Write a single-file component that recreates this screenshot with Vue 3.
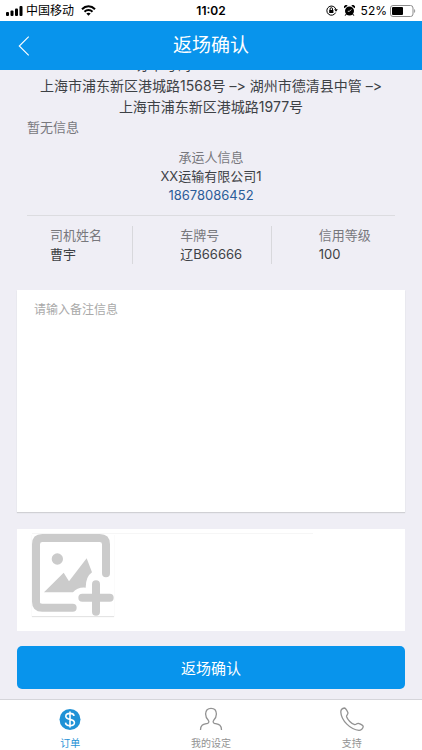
<script setup>
import { ref } from 'vue'

const remark = ref('')
const activeTab = ref('order')

const orderNo = '订单号码: 20171030077'
const route = '上海市浦东新区港城路1568号 –> 湖州市德清县中管 –> 上海市浦东新区港城路1977号'
const driver = [
  { label: '司机姓名', value: '曹宇' },
  { label: '车牌号', value: '辽B66666' },
  { label: '信用等级', value: '100' },
]
const tabs = [
  { id: 'order', label: '订单' },
  { id: 'settings', label: '我的设定' },
  { id: 'support', label: '支持' },
]
</script>

<template>
  <div class="page">
    <div class="status">
      <div class="status-side">
        <svg class="signal" width="17" height="10" viewBox="0 0 17 10" aria-hidden="true">
          <rect x="0" y="6" width="3" height="4" rx="1" />
          <rect x="4.5" y="4.5" width="3" height="5.5" rx="1" />
          <rect x="9" y="2.5" width="3" height="7.5" rx="1" />
          <rect x="13.5" y="0" width="3" height="10" rx="1" />
        </svg>
        <span class="carrier">中国移动</span>
        <svg class="wifi" width="15" height="11" viewBox="0 0 15 11" fill="none" stroke="#000" stroke-width="2" aria-hidden="true">
          <path d="M1 4.2C4.7.4 10.3.4 14 4.2" />
          <path d="M3.5 6.8C5.8 4.5 9.2 4.5 11.5 6.8" />
          <path d="M7.5 10.8L5.3 8.5C6.5 7.4 8.5 7.4 9.7 8.5Z" fill="#000" stroke="none" />
        </svg>
      </div>
      <strong class="clock">11:02</strong>
      <div class="status-side status-end">
        <svg width="12" height="11" viewBox="0 0 12 11" fill="none" stroke="#000" aria-hidden="true">
          <path d="M9.6 7.6A4.6 4.6 0 1 1 9.9 4.5" />
          <path d="M8.2 4.3h3.6L10 6.8z" fill="#000" stroke="none" />
          <rect x="3.2" y="5" width="4.2" height="3" fill="#000" stroke="none" />
          <path d="M4.1 5V3.9a1.2 1.2 0 0 1 2.4 0V5" />
        </svg>
        <svg class="alarm" width="11" height="11" viewBox="0 0 11 11" aria-hidden="true">
          <circle cx="5.5" cy="6" r="4.5" />
          <path d="M.4 3.2A2 2 0 0 1 3.6.8zM10.6 3.2A2 2 0 0 0 7.4.8z" />
          <path d="M2.2 9l-1 1.7M8.8 9l1 1.7" stroke="#000" />
          <path d="M7.3 4.4L5.5 6.3H3.8" fill="none" stroke="#fff" stroke-width=".8" />
        </svg>
        <span class="percent">52%</span>
        <svg width="26" height="12" viewBox="0 0 26 12" aria-hidden="true">
          <rect x=".5" y=".5" width="22.5" height="11" rx="2.5" fill="none" stroke="#8c8c8c" />
          <rect x="2" y="2" width="11" height="8" rx="1" />
          <path d="M24.2 4v4c1.3-.6 1.3-3.4 0-4z" fill="#8c8c8c" />
        </svg>
      </div>
    </div>

    <header class="bar">
      <button class="back" type="button" aria-label="返回">
        <svg width="14" height="24" viewBox="0 0 14 24" fill="none" stroke="#fff" stroke-width="1.3" aria-hidden="true">
          <path d="M12.5 1L1.5 12L12.5 23" />
        </svg>
      </button>
      <h1 class="title">返场确认</h1>
    </header>

    <main class="content">
      <section class="info">
        <div class="route">
          <p>{{ orderNo }}</p>
          <p>{{ route }}</p>
        </div>
        <p class="muted">暂无信息</p>
        <div class="carrier-info">
          <p class="muted">承运人信息</p>
          <p>XX运输有限公司1</p>
          <p><a class="phone" href="tel:18678086452">18678086452</a></p>
        </div>
        <dl class="driver">
          <div v-for="item in driver" :key="item.label" class="driver-cell">
            <dt class="muted">{{ item.label }}</dt>
            <dd>{{ item.value }}</dd>
          </div>
        </dl>
      </section>

      <form class="form" @submit.prevent>
        <textarea v-model="remark" class="remark" aria-label="备注信息" placeholder="请输入备注信息"></textarea>
        <div class="upload">
          <div class="upload-row">
            <button class="add-photo" type="button" aria-label="添加图片">
              <svg width="82" height="82" viewBox="0 0 246 246" fill="none" stroke="#cbcbcb" stroke-width="24" stroke-linecap="round" aria-hidden="true">
                <path d="M222 118V31Q222 12 203 12H31Q12 12 12 31V203Q12 221 31 221H122" />
                <path d="M192 151V233M151 191H233" />
                <circle cx="76" cy="75" r="17" fill="#cbcbcb" stroke="none" />
                <path d="M36 175L95 116L111 142L164 73L180 115Q161 128 161 161Q136 159 123 175Z" fill="#cbcbcb" stroke="none" />
              </svg>
            </button>
          </div>
        </div>
        <button class="submit" type="submit">返场确认</button>
      </form>
    </main>

    <nav class="tabs">
      <a
        v-for="tab in tabs"
        :key="tab.id"
        class="tab"
        :class="{ active: tab.id === activeTab }"
        :href="'#' + tab.id"
        @click="activeTab = tab.id"
      >
        <svg v-if="tab.id === 'order'" width="24" height="24" viewBox="0 0 24 24" fill="none" aria-hidden="true">
          <circle cx="12" cy="12.500" r="10.500" fill="currentColor" />
          <path d="M12 4.500V20.500M16 9C15.800 7.200 14.400 6.400 12 6.400S7.800 7.500 7.800 9.300C7.800 11.300 9.700 11.900 12 12.400S16.400 13.700 16.400 15.700S14.500 18.600 12 18.600S7.700 17.500 7.500 15.600" stroke="#fff" stroke-width="1.600" />
        </svg>
        <svg v-else-if="tab.id === 'settings'" width="24" height="24" viewBox="0 0 24 24" fill="none" stroke="currentColor" stroke-width="1.3" aria-hidden="true">
          <path d="M1.500 23C1.500 17.300 4.500 17.300 8.500 16.300C10.200 15.800 10.100 14.300 9.300 13.300C7.600 11.600 6.600 9.500 6.600 7.100C6.600 3.400 8.800 1.300 12 1.300S17.400 3.400 17.400 7.100C17.400 9.500 16.400 11.600 14.700 13.300C13.900 14.300 13.800 15.800 15.500 16.300C19.500 17.300 22.500 17.300 22.500 23" />
        </svg>
        <svg v-else width="24" height="24" viewBox="0 0 24 24" fill="none" stroke="currentColor" stroke-width="1.3" stroke-linejoin="round" aria-hidden="true">
          <path d="M4.500 1C2.500 1.300.8 3 .8 5C1.200 13.500 10.500 22.800 19 23.300C21 23.300 23 21.500 23.200 19.600C23.200 18.500 20 16.800 18.300 16.300C16.800 16 16 18 14.700 17.700C11.500 16.700 7.500 12.700 6.500 9.500C6.200 8.200 8.200 7.400 8 5.900C7.500 4.200 5.600 1 4.500 1Z" />
        </svg>
        <span>{{ tab.label }}</span>
      </a>
    </nav>
  </div>
</template>

<style>
body {
  margin: 0;
  background: #efeef5;
}
</style>

<style scoped>
.page {
  display: flex;
  flex-direction: column;
  min-height: 100vh;
  background: #efeef5;
  color: #3d4145;
  font-family: Inter, "Noto Sans CJK SC", sans-serif;
  font-size: 13px;
  line-height: 19px;
}
.page * {
  box-sizing: border-box;
}
p, h1, dl, dd {
  margin: 0;
}
button, textarea {
  font-family: inherit;
  border: 0;
  margin: 0;
}
.status {
  display: flex;
  align-items: center;
  height: 21px;
  padding: 0 6px;
  background: #fff;
  color: #000;
  font-size: 12px;
}
.status-side {
  display: flex;
  flex: 1;
  align-items: center;
}
.status-end {
  justify-content: flex-end;
}
.carrier {
  margin: 0 7px 0 3px;
}
.clock {
  font-size: 12px;
  font-weight: 600;
}
.alarm {
  margin: 0 6px;
}
.percent {
  margin-right: 3px;
}
.bar {
  display: grid;
  grid-template-columns: 48px 1fr 48px;
  align-items: center;
  height: 49px;
  background: #0894ec;
  color: #fff;
}
.back {
  display: flex;
  padding: 8px 18px;
  background: none;
}
.title {
  text-align: center;
  font-size: 19px;
  font-weight: 400;
  line-height: 24px;
}
.content {
  flex: 1;
  overflow: hidden;
}
.info {
  padding: 0 27px;
}
/* The order number line sits scrolled under the title bar. */
.route {
  margin: -16px 0 1px;
  padding: 0 8px;
  font-size: 14px;
  font-variant-ligatures: no-contextual;
  line-height: 21px;
  text-align: center;
}
.muted {
  color: #78787d;
}
.carrier-info {
  padding: 11px 0 10px;
  border-bottom: 1px solid #dcdce0;
  text-align: center;
}
.phone {
  color: #2c5c98;
  text-decoration: none;
}
.driver {
  display: grid;
  grid-template-columns: 106fr 138fr 123fr;
  padding: 10px 0 26px;
}
.driver-cell {
  padding-left: 47px;
}
.driver-cell:first-child {
  padding-left: 23px;
}
.driver-cell:not(:last-child) {
  border-right: 1px solid #d8d8dc;
}
.form {
  display: flex;
  flex-direction: column;
  gap: 17px;
  padding: 0 17px 10px;
}
.remark {
  display: block;
  width: 100%;
  height: 222px;
  padding: 10px 17px;
  border-radius: 0;
  outline: 0;
  resize: none;
  background: #fff;
  box-shadow: 0 1px 1px #d0d0d4;
  color: #3d4145;
  font-size: 12px;
  line-height: 19px;
}
.remark::placeholder {
  color: #a9a9a9;
  opacity: 1;
}
.upload {
  padding: 4px 92px 15px 15px;
  background: #fff;
}
.upload-row {
  border-top: 1px solid #f6f6f6;
}
.add-photo {
  display: flex;
  padding: 0;
  background: #fff;
  box-shadow: 0 1px 1px #e4e4e4;
}
.submit {
  height: 43px;
  margin-top: -2px;
  border-radius: 5px;
  background: #0894ec;
  color: #fff;
  font-size: 15px;
}
.tabs {
  display: grid;
  grid-template-columns: repeat(3, 1fr);
  height: 51px;
  border-top: 1px solid #d5d5da;
  background: #fff;
}
.tab {
  display: flex;
  flex-direction: column;
  align-items: center;
  gap: 5px;
  padding-top: 7px;
  color: #929292;
  font-size: 10px;
  line-height: 14px;
  text-decoration: none;
}
.tab.active {
  color: #1f92d6;
}
</style>
